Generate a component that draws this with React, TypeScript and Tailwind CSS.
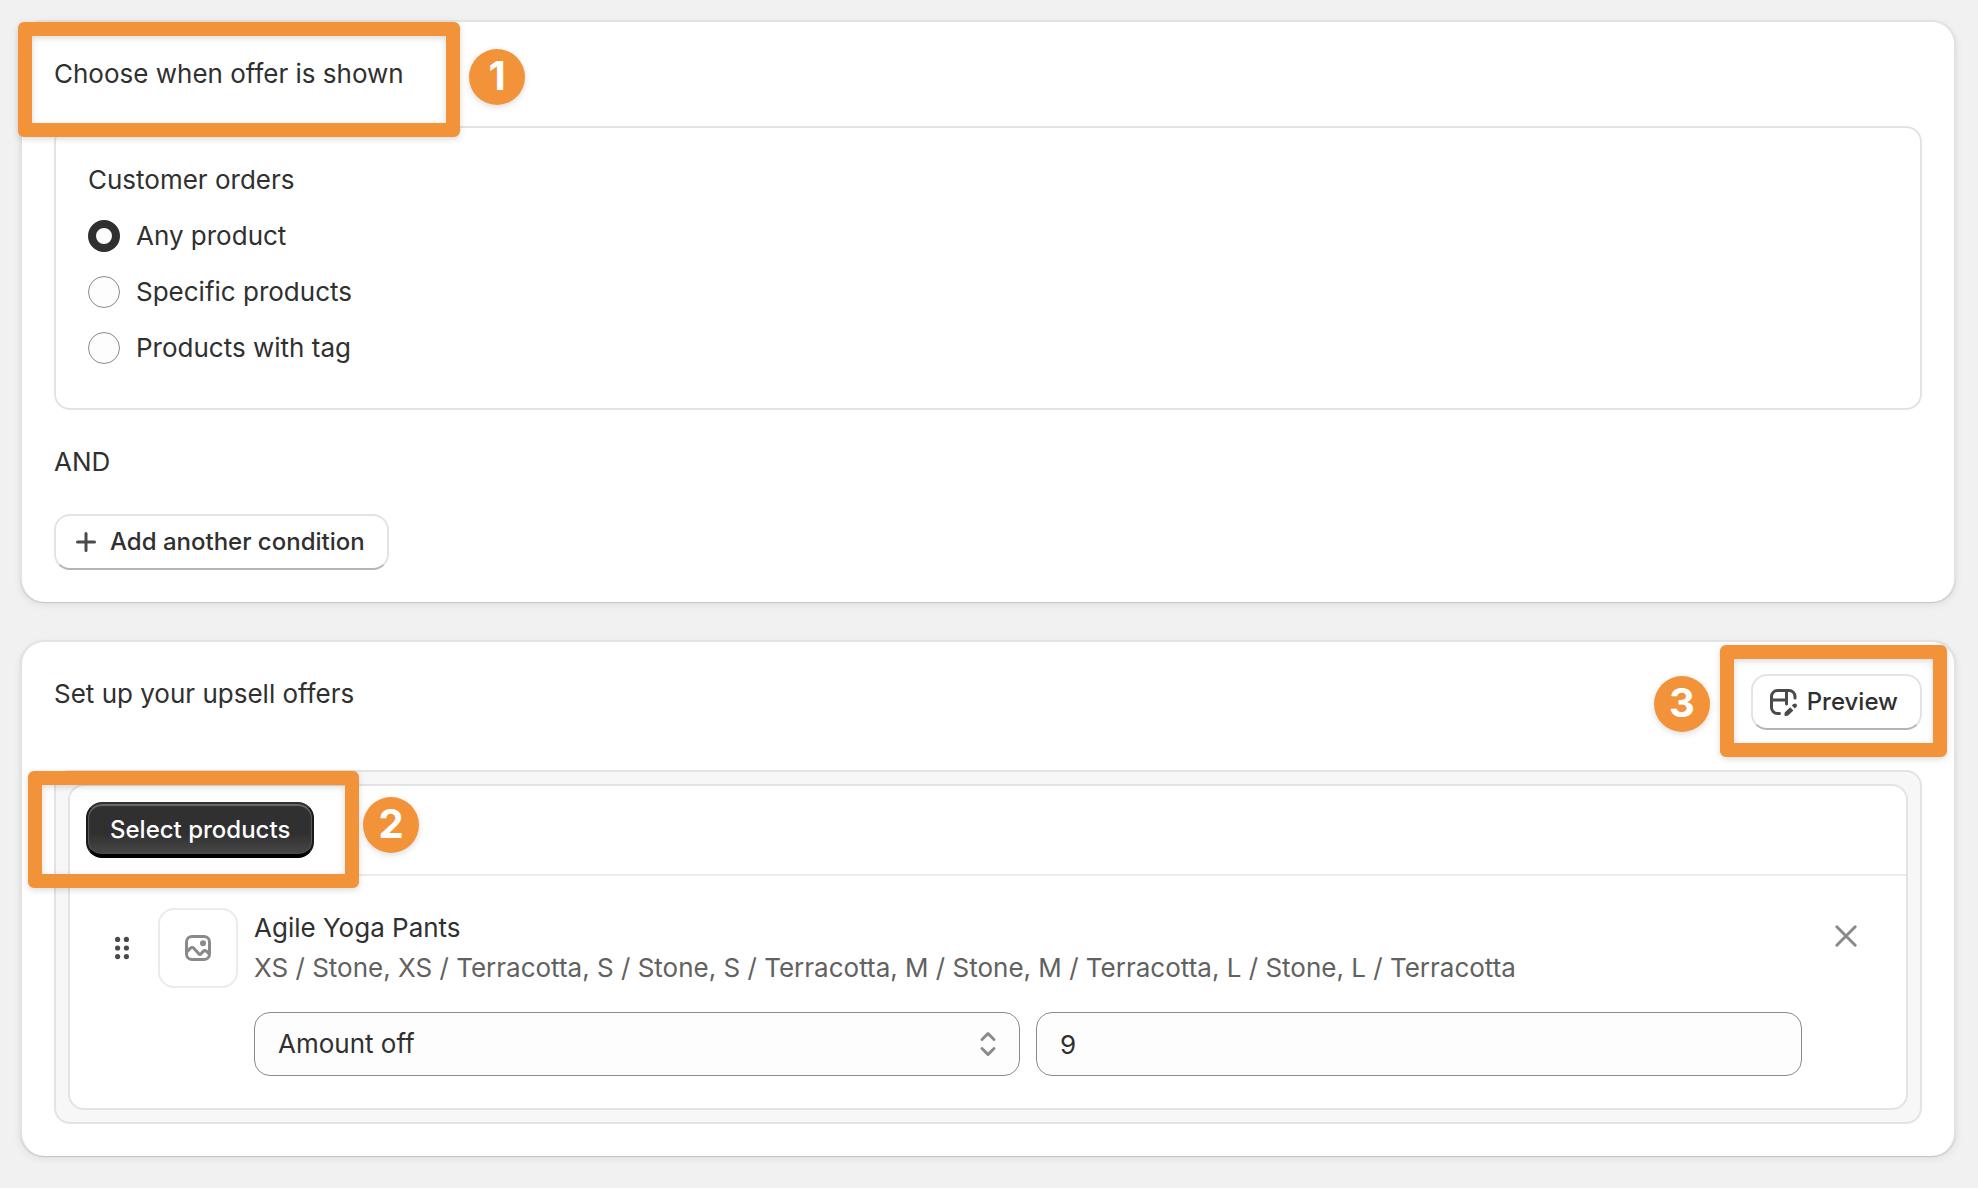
import { useState } from 'react'
import type { ReactNode } from 'react'

const conditions = ['Any product', 'Specific products', 'Products with tag']

function Card({ children }: { children: ReactNode }) {
  return (
    <section className="relative rounded-3xl border-2 border-b-0 border-[#e3e3e3] bg-white shadow-[0_1px_1px_#c4c4c4,0_3px_8px_rgba(0,0,0,0.07)]">
      <div className="p-8">{children}</div>
    </section>
  )
}

function Highlight({ className }: { className: string }) {
  return (
    <div
      className={`pointer-events-none absolute rounded-md border-14 border-[#f29339] drop-shadow-[0_2px_3px_rgba(0,0,0,0.15)] ${className}`}
    />
  )
}

function Step({ n, className }: { n: number; className: string }) {
  return (
    <span
      className={`absolute flex size-14 items-center justify-center rounded-full bg-[#f29339] pb-0.5 text-[40px] leading-10 font-bold text-white shadow-[0_2px_6px_rgba(0,0,0,0.15)] ${className}`}
    >
      {n}
    </span>
  )
}

function PlusIcon() {
  return (
    <svg viewBox="0 0 20 20" className="size-10" fill="none" stroke="#4a4a4a" strokeWidth="1.5" strokeLinecap="round">
      <path d="M10 5.75v8.5M5.75 10h8.5" />
    </svg>
  )
}

function LayoutEditIcon() {
  return (
    <svg viewBox="0 0 20 20" className="size-10" fill="none" stroke="#4a4a4a" strokeWidth="1.5" strokeLinecap="round">
      <path d="M8.25 15.75h-1a3 3 0 0 1-3-3v-5.5a3 3 0 0 1 3-3h5.75a3 3 0 0 1 3 3v.75" />
      <path d="M4.25 9h7.5M11.75 4.25v6.75" />
      <path
        d="M13.6 12.6l1.6 1.6-2.5 2.4c-.2.2-.4.3-.7.3l-.9.1c-.2 0-.4-.2-.4-.4l.1-.9c0-.3.1-.5.3-.7z"
        fill="#4a4a4a"
        stroke="none"
      />
      <path d="M14.4 11.8l.8-.8c.4-.4 1.1-.4 1.5 0s.4 1.1 0 1.5l-.8.8z" fill="#4a4a4a" stroke="none" />
    </svg>
  )
}

function DragIcon() {
  return (
    <svg viewBox="0 0 20 20" className="size-10 shrink-0" fill="#4a4a4a">
      {[5.7, 10, 14.3].map((y) => (
        <g key={y}>
          <circle cx="7.8" cy={y} r="1.3" />
          <circle cx="12.2" cy={y} r="1.3" />
        </g>
      ))}
    </svg>
  )
}

function ImageIcon() {
  return (
    <svg viewBox="0 0 20 20" className="size-10" fill="none" stroke="#8a8a8a" strokeWidth="1.5">
      <rect x="4.25" y="4.25" width="11.5" height="11.5" rx="2.75" />
      <path d="M4.4 12l1.7-1.8c.5-.6 1.4-.6 1.9 0l2.4 2.7c.3.4.8.4 1.1 0l1.1-1.2c.5-.5 1.2-.5 1.7 0l1.2 1.2" />
      <circle cx="12.5" cy="7.6" r="1.5" fill="#8a8a8a" stroke="none" />
    </svg>
  )
}

export default function App() {
  const [condition, setCondition] = useState(conditions[0])
  const [amount, setAmount] = useState('9')

  return (
    <main className="flex min-h-screen flex-col gap-[38px] bg-[#f1f1f1] pt-5 pr-[22px] pb-8 pl-5 font-[Inter,sans-serif] text-[26px] leading-10 text-[#303030]">
      <Card>
        <h2>Choose when offer is shown</h2>
        <fieldset
          aria-labelledby="orders-title"
          className="mt-8 flex flex-col gap-4 rounded-2xl border-2 border-[#e3e3e3] px-8 pt-8 pb-10"
        >
          <p id="orders-title">Customer orders</p>
          {conditions.map((label) => (
            <label key={label} className="flex items-center gap-4 self-start">
              <input
                type="radio"
                name="condition"
                checked={condition === label}
                onChange={() => setCondition(label)}
                className="size-8 appearance-none rounded-full border border-[#8a8a8a] bg-[#fdfdfd] checked:border-8 checked:border-[#303030]"
              />
              {label}
            </label>
          ))}
        </fieldset>
        <p className="mt-8">AND</p>
        <button
          type="button"
          className="mt-8 flex h-14 items-center gap-1 rounded-2xl border-2 border-[#e3e3e3] border-b-[#b5b5b5] bg-white pr-[22px] pl-[10px] text-2xl font-[550]"
        >
          <PlusIcon />
          Add another condition
        </button>
        <Highlight className="top-0 -left-1 h-[115px] w-[442px]" />
        <Step n={1} className="top-[27px] left-[447px]" />
      </Card>

      <Card>
        <header className="flex items-start justify-between">
          <h2>Set up your upsell offers</h2>
          <button
            type="button"
            className="flex h-14 items-center gap-1 rounded-2xl border-2 border-[#e3e3e3] border-b-[#b5b5b5] bg-white pr-[22px] pl-[10px] text-2xl font-[550]"
          >
            <LayoutEditIcon />
            Preview
          </button>
        </header>
        <div className="mt-10 rounded-2xl border-2 border-[#e3e3e3] bg-[#f7f7f7] p-3">
          <div className="rounded-2xl border-2 border-[#e3e3e3] bg-white">
            <div className="border-b-2 border-[#ebebeb] p-4">
              <button
                type="button"
                className="h-14 rounded-2xl border-2 border-[#1a1a1a] border-t-[#303030] border-b-4 border-b-black bg-linear-to-b from-[#303030] from-60% to-[#484848] px-[22px] pt-0.5 text-2xl font-[550] text-white shadow-[inset_0_2px_1px_#6a6a6a,inset_1px_0_1px_#5a5a5a,inset_-1px_0_1px_#5a5a5a]"
              >
                Select products
              </button>
            </div>
            <div className="flex items-start gap-4 p-8">
              <div className="flex items-center gap-4">
                <DragIcon />
                <div className="flex size-20 items-center justify-center rounded-2xl border-2 border-[#ebebeb]">
                  <ImageIcon />
                </div>
              </div>
              <div className="min-w-0 flex-1">
                <h3>Agile Yoga Pants</h3>
                <p className="text-[#616161]">
                  XS / Stone, XS / Terracotta, S / Stone, S / Terracotta, M / Stone, M / Terracotta, L / Stone, L / Terracotta
                </p>
                <div className="mt-6 grid grid-cols-2 gap-4">
                  <div className="relative">
                    <select
                      aria-label="Discount type"
                      className="h-16 w-full appearance-none rounded-2xl border border-[#8a8a8a] bg-[#fdfdfd] px-[23px]"
                    >
                      <option>Amount off</option>
                    </select>
                    <svg
                      viewBox="0 0 20 20"
                      className="pointer-events-none absolute top-3 right-3 size-10"
                      fill="none"
                      stroke="#8a8a8a"
                      strokeWidth="1.5"
                      strokeLinecap="round"
                      strokeLinejoin="round"
                    >
                      <path d="M7 7.75l3-3 3 3M7 12.25l3 3 3-3" />
                    </svg>
                  </div>
                  <input
                    aria-label="Discount value"
                    value={amount}
                    onChange={(e) => setAmount(e.target.value)}
                    className="h-16 w-full rounded-2xl border border-[#8a8a8a] bg-[#fdfdfd] px-[23px]"
                  />
                </div>
              </div>
              <button type="button" aria-label="Remove product" className="p-2">
                <svg viewBox="0 0 20 20" className="size-10" fill="none" stroke="#8a8a8a" strokeWidth="1.5" strokeLinecap="round">
                  <path d="M5.4 5.4l9.2 9.2M14.6 5.4l-9.2 9.2" />
                </svg>
              </button>
            </div>
          </div>
        </div>
        <Highlight className="top-[129px] left-[6px] h-[117px] w-[331px]" />
        <Step n={2} className="top-[155px] left-[341px]" />
        <Highlight className="top-[3px] right-[7px] h-28 w-[227px]" />
        <Step n={3} className="top-[34px] right-[244px]" />
      </Card>
    </main>
  )
}
